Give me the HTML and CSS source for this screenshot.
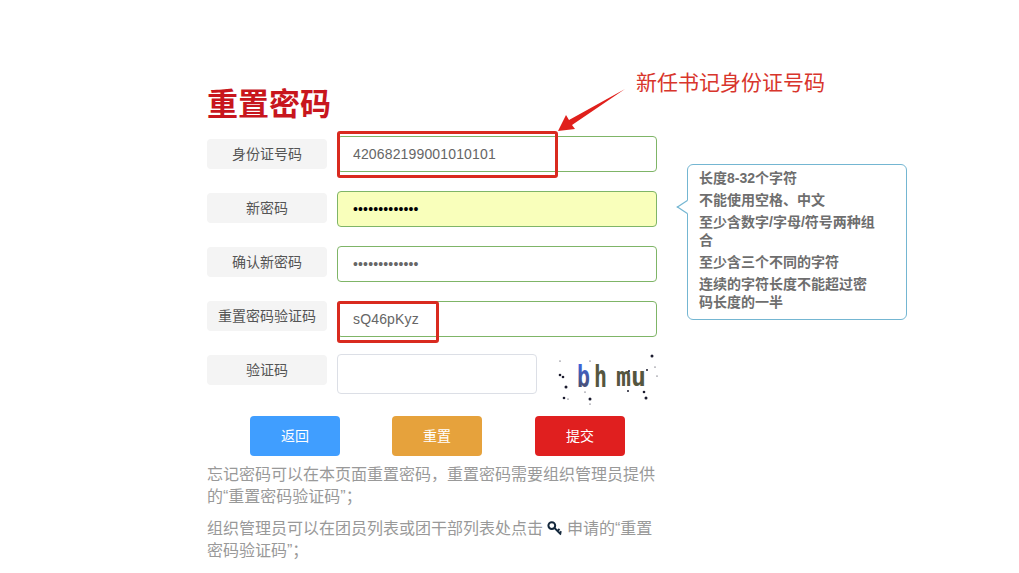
FILE: index.html
```html
<!DOCTYPE html>
<html lang="zh-CN">
<head>
    <meta charset="UTF-8">
    <meta name="viewport" content="width=device-width, initial-scale=1.0">
    <title>重置密码</title>
    <link rel="stylesheet" href="styles.css">
</head>
<body>
    <div class="main">
        <h1>重置密码</h1>
        <form class="reset-form">
            <div class="labels">
                <label for="idcard">身份证号码</label>
                <label for="newpwd">新密码</label>
                <label for="repwd">确认新密码</label>
                <label for="resetcode">重置密码验证码</label>
                <label for="code">验证码</label>
            </div>
            <div class="fields">
                <input class="ok" type="text" id="idcard" value="420682199001010101">
                <input class="ok autofill" type="password" id="newpwd" value="1234567890123">
                <input class="ok" type="password" id="repwd" value="1234567890123">
                <input class="ok" type="text" id="resetcode" value="sQ46pKyz">
                <div class="code-row">
                    <input class="code-input" type="text" id="code">
                    <svg class="captcha" width="100" height="52" viewBox="0 0 100 52">
                        <defs>
                            <linearGradient id="captchaBlue" x1="0" y1="0" x2="0" y2="1">
                                <stop offset="0.2" stop-color="#3f63d8"/>
                                <stop offset="0.95" stop-color="#4b4a5c"/>
                            </linearGradient>
                        </defs>
                        <text class="captcha-big" x="19" y="33" fill="url(#captchaBlue)" textLength="13" lengthAdjust="spacingAndGlyphs">b</text>
                        <text class="captcha-big" x="36" y="33" fill="#55563f" textLength="13" lengthAdjust="spacingAndGlyphs">h</text>
                        <text class="captcha-small" x="58" y="32" textLength="30" lengthAdjust="spacingAndGlyphs">mu</text>
                        <g fill="#1b1b2e">
                            <circle cx="94" cy="2" r="1.5"/>
                            <circle cx="2" cy="21" r="1.3"/>
                            <circle cx="5" cy="23" r="1.3"/>
                            <circle cx="8" cy="33" r="1.5"/>
                            <circle cx="6" cy="44" r="1.3"/>
                            <circle cx="32" cy="45" r="1.5"/>
                            <circle cx="86" cy="38" r="1.3"/>
                            <circle cx="88" cy="44" r="1.5"/>
                            <circle cx="71" cy="17" r="1"/>
                            <circle cx="89" cy="16" r="1"/>
                            <circle cx="70" cy="37" r="1"/>
                            <circle cx="2" cy="7" r=".6"/>
                            <circle cx="32" cy="7" r=".6"/>
                            <circle cx="97" cy="13" r=".6"/>
                            <circle cx="99" cy="22" r=".6"/>
                            <circle cx="27" cy="38" r=".6"/>
                            <circle cx="32" cy="50" r=".6"/>
                            <circle cx="10" cy="45" r=".6"/>
                        </g>
                    </svg>
                </div>
            </div>
        </form>
        <div class="actions">
            <button type="button" class="btn btn-back">返回</button>
            <button type="button" class="btn btn-reset">重置</button>
            <button type="button" class="btn btn-submit">提交</button>
        </div>
        <p>忘记密码可以在本页面重置密码，重置密码需要组织管理员提供的“重置密码验证码”；</p>
        <p>组织管理员可以在团员列表或团干部列表处点击
            <svg class="key-icon" width="15" height="15" viewBox="0 0 15 15">
                <circle cx="4.8" cy="4.6" r="3.4" fill="none" stroke="#14283c" stroke-width="2"/>
                <path d="M7.5 7 L14 13.5 M10.5 10 L12.5 8 M12.6 12.2 L14.4 10.4" fill="none" stroke="#14283c" stroke-width="1.8"/>
            </svg>
            申请的“重置<br>密码验证码”；</p>
    </div>

    <div class="tip">
        <ul>
            <li>长度8-32个字符</li>
            <li>不能使用空格、中文</li>
            <li>至少含数字/字母/符号两种组合</li>
            <li>至少含三个不同的字符</li>
            <li>连续的字符长度不能超过密码长度的一半</li>
        </ul>
    </div>

    <!-- 截图上的红色标注 -->
    <div class="mark mark-id"></div>
    <div class="mark mark-code"></div>
    <svg class="mark-arrow" width="70" height="46" viewBox="0 0 70 46">
        <polygon points="1,44 9,28 12,33 68,2 15,38 18,42" fill="#e0201c"/>
    </svg>
    <div class="mark-text">新任书记身份证号码</div>
</body>
</html>
```

FILE: styles.css
```css
body {
    margin: 0;
    background-color: #fff;
    font-family: "Liberation Sans", "Noto Sans CJK SC", sans-serif;
    color: #666;
}
.main {
    width: 450px;
    margin-left: 207px;
    padding-top: 85px;
}
h1 {
    margin: 0 0 11px;
    font-size: 31px;
    line-height: 40px;
    font-weight: bold;
    color: #c8161d;
}
.reset-form {
    display: flex;
    gap: 10px;
}
.labels {
    display: flex;
    flex-direction: column;
    gap: 24px;
    padding-top: 3px;
}
label {
    width: 120px;
    height: 30px;
    line-height: 30px;
    text-align: center;
    font-size: 14px;
    color: #555;
    background-color: #f4f4f4;
    border-radius: 4px;
}
.fields {
    display: flex;
    flex-direction: column;
    gap: 19px;
    width: 320px;
}
input {
    box-sizing: border-box;
    height: 36px;
    padding: 0 15px;
    border: 1px solid #dcdfe6;
    border-radius: 4px;
    font-family: "Liberation Sans", sans-serif;
    font-size: 14px;
    letter-spacing: .15px;
    color: #666;
    background-color: #fff;
}
.ok {
    width: 320px;
    border-color: #7fb567;
}
.autofill {
    background-color: #f9ffbb;
    color: #000;
}
.code-row {
    display: flex;
    justify-content: space-between;
    margin-top: -2px;
}
.code-input {
    width: 200px;
    height: 40px;
}
.captcha {
    margin-right: -1px;
}
.captcha-big {
    font-family: "DejaVu Sans Mono", monospace;
    font-size: 31px;
    font-weight: bold;
}
.captcha-small {
    font-family: "DejaVu Sans Mono", monospace;
    font-size: 27px;
    font-weight: bold;
    fill: #55563f;
}
.actions {
    display: flex;
    gap: 52px;
    padding-left: 43px;
    margin-top: 10px;
}
.btn {
    width: 90px;
    height: 40px;
    padding: 0 0 2px;
    border: none;
    border-radius: 4px;
    color: #fff;
    font-family: inherit;
    font-size: 14px;
}
.btn-back {
    background-color: #409eff;
}
.btn-reset {
    background-color: #e6a23c;
}
.btn-submit {
    margin-left: 1px;
    background-color: #e01f1f;
}
p {
    margin: 8px 0 10px;
    font-size: 16px;
    line-height: 22px;
    color: #999;
}
p + p {
    margin-top: 10px;
}
.key-icon {
    vertical-align: -2px;
}
.tip {
    position: absolute;
    left: 687px;
    top: 164px;
    box-sizing: border-box;
    width: 220px;
    height: 156px;
    padding: 4px 27px 0 11px;
    border: 1px solid #74b6d2;
    border-radius: 6px;
    background-color: #fff;
}
.tip::before {
    content: "";
    position: absolute;
    left: -6px;
    top: 37px;
    width: 9px;
    height: 9px;
    background-color: #fff;
    border-left: 1px solid #74b6d2;
    border-bottom: 1px solid #74b6d2;
    transform: scaleX(1.5) rotate(45deg);
}
.tip ul {
    margin: 0;
    padding: 0;
    list-style: none;
}
.tip li {
    margin-bottom: 4px;
    font-size: 14px;
    line-height: 18px;
    font-weight: bold;
    color: #6e6e6e;
}
.mark {
    position: absolute;
    box-sizing: border-box;
    border: 3px solid #d92a1f;
    border-radius: 3px;
}
.mark-id {
    left: 337px;
    top: 131px;
    width: 221px;
    height: 47px;
}
.mark-code {
    left: 337px;
    top: 301px;
    width: 102px;
    height: 42px;
}
.mark-arrow {
    position: absolute;
    left: 557px;
    top: 87px;
}
.mark-text {
    position: absolute;
    left: 636px;
    top: 68px;
    font-size: 21px;
    line-height: 30px;
    color: #d8352c;
}
```
